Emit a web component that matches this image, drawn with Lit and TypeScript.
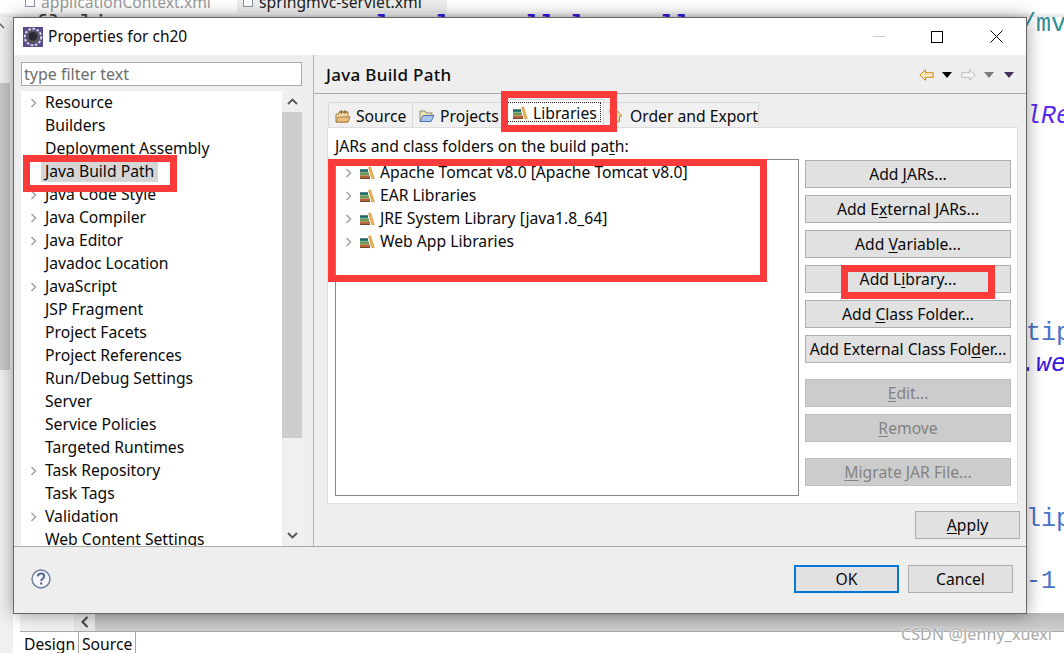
import { LitElement, html, css } from "lit";
import { customElement } from "lit/decorators.js";

const chevron = html`<svg class="chev" width="7" height="10" viewBox="0 0 7 10"><path d="M1.5 1l4 4-4 4" fill="none" stroke="#a6a6a6" stroke-width="1.6"/></svg>`;

const books = html`<svg class="ico" width="16" height="14" viewBox="0 0 16 14">
  <path d="M1 3.5h8v3H1z" fill="#2f7f78"/><path d="M1 3.5h8v1H1z" fill="#174f50"/>
  <path d="M1 6.5h9v3H1z" fill="#6f9a55"/><path d="M1 9.5h10v3.5H1z" fill="#b0653a"/><path d="M1 12h10v1H1z" fill="#7d4426"/>
  <path d="M9.5 1.5l2-.8 3.8 11.8-2.4.5z" fill="#eeb64e" stroke="#b9802a" stroke-width=".5"/>
</svg>`;

const tree: [string, boolean][] = [
  ["Resource", true], ["Builders", false], ["Deployment Assembly", false], ["Java Build Path", false],
  ["Java Code Style", true], ["Java Compiler", true], ["Java Editor", true], ["Javadoc Location", false],
  ["JavaScript", true], ["JSP Fragment", false], ["Project Facets", false], ["Project References", false],
  ["Run/Debug Settings", false], ["Server", false], ["Service Policies", false], ["Targeted Runtimes", false],
  ["Task Repository", true], ["Task Tags", false], ["Validation", true], ["Web Content Settings", false],
];

const libs = ["Apache Tomcat v8.0 [Apache Tomcat v8.0]", "EAR Libraries", "JRE System Library [java1.8_64]", "Web App Libraries"];

@customElement("app-root")
export class AppRoot extends LitElement {
  static styles = css`
    :host { display: block; position: relative; width: 1064px; height: 653px; overflow: hidden; background: #fff;
      font-family: "Noto Sans", sans-serif; font-size: 15.7px; color: #0a0a0a; }
    * { box-sizing: border-box; }
    u { text-underline-offset: 2px; text-decoration-thickness: 1px; }

    /* desktop behind the dialog */
    .topstrip { position: absolute; left: 0; top: 0; width: 1064px; height: 17px; background: linear-gradient(#fff 70%, #e4e4e4); }
    .etab { position: absolute; top: -9px; white-space: nowrap; }
    .etab.a { left: 41px; color: #9a9a9a; }
    .etab.b { left: 259px; color: #222; }
    .etabbg { position: absolute; left: 237px; top: 0; width: 210px; height: 13px; background: #eee; }
    .xfile { position: absolute; top: 0; width: 10px; height: 7px; border: 1px solid #8a93a8; border-top: 0; background: #fff; }
    .leftgrey { position: absolute; left: 0; top: 17px; width: 13px; height: 636px; background: #f0f0f0; }
    .leftup { position: absolute; left: 0; top: 22px; }
    .leftthumb { position: absolute; left: 0; top: 83px; width: 10px; height: 287px; background: #c8c8c8; }
    .tips { position: absolute; left: 0; top: 0; width: 1014px; height: 17px; overflow: hidden; }
    .code { position: absolute; font-family: "Liberation Mono", monospace; font-size: 25px; white-space: pre; line-height: 30px; }
    .c0 { left: 375px; top: 12px; color: #3a18e0; font-weight: 700; }
    .c00 { left: 33px; top: 12px; color: #444; }
    .c1 { left: 1021px; top: 10px; color: #2f8f98; }
    .c2 { left: 1026px; top: 102px; color: #5a2cf0; font-style: italic; }
    .c3 { left: 1026px; top: 319px; color: #4a74c8; }
    .c4 { left: 1021px; top: 350px; color: #3a18e0; font-style: italic; }
    .c5 { left: 1026px; top: 505px; color: #4a74c8; }
    .c6 { left: 1026px; top: 567px; color: #4a74c8; }
    .hbar { position: absolute; left: 20px; top: 613px; width: 1044px; height: 19px; display: flex; border-bottom: 1px solid #a8a8a8; background: #f2f2f2; }
    .hbtn { margin-left: 54px; width: 21px; background: #e6e6e6; display: flex; align-items: center; justify-content: center; }
    .hthumb { flex: 1; background: linear-gradient(#b8b8b8, #cfcfcf); }
    .btabs { position: absolute; left: 20px; top: 632px; display: flex; height: 21px; line-height: 24px; }
    .btabs span { padding: 0 1px 0 4px; border-right: 1px solid #a8a8a8; background: #fff; }
    .btabs span:first-child { width: 59px; }
    .btabs span:last-child { width: 57px; padding-left: 3px; }
    .wm { position: absolute; left: 901px; top: 624px; font-size: 16px; line-height: 20px; color: #a9a9a9; letter-spacing: .1px; text-shadow: 0 0 1px #fff, 0 0 2px #fff; }

    /* dialog */
    .dialog { position: absolute; left: 13px; top: 17px; width: 1014px; height: 597px; background: #eee; border: 1px solid #666;
      box-shadow: 0 0 16px rgba(0,0,0,.38); display: flex; flex-direction: column; }
    .title { height: 37px; background: #fff; display: flex; align-items: center; padding-left: 9px; gap: 5px; flex: none; }
    .title .name { flex: 1; padding-bottom: 1px; font-size: 15.5px; }
    .winbtns { display: flex; height: 37px; }
    .winbtn { width: 59px; display: flex; align-items: center; justify-content: center; }
    .winbtn.mx { padding-right: 1px; }
    .body { flex: 1; display: flex; min-height: 0; }
    .left { width: 299px; flex: none; padding: 7px 11px 0 7px; display: flex; flex-direction: column; gap: 5px; min-height: 0; }
    .filter { height: 24px; flex: none; background: #fff; border: 1px solid #aaa; color: #6d6d6d; padding-left: 2px; line-height: 22px; font-size: 16px; }
    .tree { flex: 1; min-height: 0; background: #fff; display: flex; overflow: hidden; }
    .rows { flex: 1; min-width: 0; overflow: hidden; }
    .row { height: 23px; display: flex; align-items: center; padding-left: 9px; line-height: 21px; white-space: nowrap; }
    .chevslot { width: 15px; flex: none; display: flex; align-items: center; }
    .row .t { padding: 0 4px 0 0; }
    .row.sel .t { background: #d6d6d6; margin-left: -4px; padding-left: 4px; height: 21px; }
    .vbar { width: 20px; flex: none; background: #f0f0f0; display: flex; flex-direction: column; }
    .vbtn { height: 21px; flex: none; display: flex; align-items: center; justify-content: center; }
    .vthumb { height: 326px; flex: none; background: #cdcdcd; }
    .vgap { flex: 1; }
    .sash { width: 1px; flex: none; background: #b4b4b4; }
    .right { flex: 1; min-width: 0; display: flex; flex-direction: column; }
    .head { height: 39px; flex: none; border-bottom: 1px solid #aaa; display: flex; align-items: center; padding: 1px 12px 0 12px; }
    .head .h { flex: 1; font-size: 17px; font-weight: 500; letter-spacing: .3px; }
    .nav { display: flex; align-items: center; }
    .content { flex: 1; min-height: 0; padding: 8px 6px 6px 13px; display: flex; flex-direction: column; }
    .tabs { display: flex; height: 25px; flex: none; padding-left: 1px; }
    .tab { height: 25px; background: #f0f0f0; border: 1px solid #d9d9d9; border-bottom: 0; border-left: 0; display: flex; align-items: center; white-space: nowrap; padding-top: 1px; position: relative; }
    .tab:first-child { border-left: 1px solid #d9d9d9; }
    .tab.src { width: 85px; padding-left: 6px; gap: 5px; }
    .tab.prj { width: 93px; padding-left: 6px; gap: 5px; }
    .tab.lib { width: 98px; height: 28px; margin-top: -3px; background: #fff; padding: 0 0 2px 6px; gap: 5px; }
    .tab.ord { width: 155px; padding-left: 4px; gap: 6px; }
    .focus { position: absolute; left: 1px; top: 2px; right: 2px; bottom: 5px; border: 1px dotted #222; pointer-events: none; }
    .panel { height: 377px; flex: none; margin-right: 2px; background: #fff; border: 1px solid #ddd; padding: 7px 0 0 7px;
      display: grid; grid-template-columns: 464px 206px; column-gap: 6px; grid-template-rows: 24px 337px; }
    .lbl { grid-column: 1 / 3; line-height: 20px; padding-top: 1px; white-space: nowrap; }
    .list { border: 1px solid #888; padding-top: 1px; }
    .lrow { height: 23px; display: flex; align-items: center; padding-left: 9px; white-space: nowrap; line-height: 21px; }
    .lrow .ico { margin-right: 5px; flex: none; }
    .lrow .chevslot { width: 14px; }
    .btns { display: flex; flex-direction: column; gap: 7px; padding-top: 1px; }
    .btn { height: 28px; flex: none; background: #e1e1e1; border: 1px solid #adadad; display: flex; align-items: center; justify-content: center; white-space: nowrap; line-height: 20px; padding: 0 0 1px; }
    .btn.off { background: #ccc; border-color: #bdbdbd; color: #838383; }
    .btn.sp { margin-top: 9px; }
    .applyrow { display: flex; justify-content: flex-end; margin-top: 7px; }
    .w105 { width: 105px; }
    .foot { height: 67px; flex: none; border-top: 1px solid #aaa; display: flex; align-items: center; padding: 0 13px 2px 17px; gap: 9px; }
    .help { flex: 1; display: flex; align-items: center; }
    .btn.def { border: 2px solid #0078d7; }

    /* hand-drawn annotations */
    .mark { position: absolute; border: 7px solid #fb3a3a; pointer-events: none; }
    .m1 { left: 23px; top: 155px; width: 154px; height: 37px; }
    .m2 { left: 501px; top: 91px; width: 116px; height: 41px; }
    .m3 { left: 328px; top: 159px; width: 439px; height: 123px; }
    .m4 { left: 841px; top: 265px; width: 154px; height: 34px; }
  `;

  render() {
    const tri = (c: string, ml: number) => html`<svg style="margin-left:${ml}px" width="10" height="6" viewBox="0 0 10 6"><path d="M0 0h10L5 6z" fill="${c}"/></svg>`;
    return html`
      <div class="topstrip"></div>
      <div class="etabbg"></div>
      <div class="xfile" style="left:25px"></div>
      <div class="xfile" style="left:243px"></div>
      <div class="etab a">applicationContext.xml</div>
      <div class="etab b">springmvc-servlet.xml</div>
      <div class="leftgrey"></div>
      <svg class="leftup" width="10" height="8" viewBox="0 0 10 8"><path d="M-1 1l5 5" fill="none" stroke="#666" stroke-width="1.5"/></svg>
      <div class="leftthumb"></div>
      <div class="tips">
        <div class="code c00">{} li</div>
        <div class="code c0">l   l     ll l     ll</div>
      </div>
      <div class="code c1">/mv</div>
      <div class="code c2">lRe</div>
      <div class="code c3">tip</div>
      <div class="code c4">.we</div>
      <div class="code c5">lip</div>
      <div class="code c6">-1</div>
      <div class="hbar">
        <div class="hbtn"><svg width="8" height="12" viewBox="0 0 8 12"><path d="M6.5 1L1.5 6l5 5" fill="none" stroke="#444" stroke-width="2"/></svg></div>
        <div class="hthumb"></div>
      </div>
      <div class="btabs"><span>Design</span><span>Source</span></div>

      <div class="dialog">
        <div class="title">
          <svg width="20" height="20" viewBox="0 0 20 20">
            <rect width="20" height="20" fill="#5b4a8c"/>
            <circle cx="10" cy="10" r="8.2" fill="none" stroke="#d9d9de" stroke-width="2" stroke-dasharray="2.6 1.6"/>
            <circle cx="10" cy="10" r="6.6" fill="#55555f"/>
            <circle cx="10" cy="9.4" r="4.4" fill="#2a2a33"/>
          </svg>
          <span class="name">Properties for ch20</span>
          <div class="winbtns">
            <div class="winbtn"><svg width="12" height="12" viewBox="0 0 12 12"><path d="M0 5.5h12" stroke="#ccc"/></svg></div>
            <div class="winbtn mx"><svg width="12" height="12" viewBox="0 0 12 12"><rect x=".5" y=".5" width="11" height="11" fill="none" stroke="#000"/></svg></div>
            <div class="winbtn"><svg width="13" height="13" viewBox="0 0 13 13"><path d="M.5.5l12 12M12.5.5l-12 12" stroke="#000"/></svg></div>
          </div>
        </div>
        <div class="body">
          <div class="left">
            <div class="filter">type filter text</div>
            <div class="tree">
              <div class="rows">
                ${tree.map(([t, c]) => html`<div class="row ${t === "Java Build Path" ? "sel" : ""}"><span class="chevslot">${c ? chevron : ""}</span><span class="t">${t}</span></div>`)}
              </div>
              <div class="vbar">
                <div class="vbtn"><svg width="11" height="7" viewBox="0 0 11 7"><path d="M1 6l4.5-4.5L10 6" fill="none" stroke="#555" stroke-width="1.8"/></svg></div>
                <div class="vthumb"></div>
                <div class="vgap"></div>
                <div class="vbtn"><svg width="11" height="7" viewBox="0 0 11 7"><path d="M1 1l4.5 4.5L10 1" fill="none" stroke="#555" stroke-width="1.8"/></svg></div>
              </div>
            </div>
          </div>
          <div class="sash"></div>
          <div class="right">
            <div class="head">
              <span class="h">Java Build Path</span>
              <div class="nav">
                <svg width="15" height="12" viewBox="0 0 15 12"><path d="M.8 6L6.5.7v3h7.7v4.6H6.5v3z" fill="#fbe7b8" stroke="#c98a1e"/></svg>
                ${tri("#000", 8)}
                <svg style="margin-left:9px" width="15" height="12" viewBox="0 0 15 12"><path d="M14.2 6L8.5.7v3H.8v4.6h7.7v3z" fill="#f4f4f4" stroke="#bdbdbd"/></svg>
                ${tri("#7a7a7a", 8)}
                ${tri("#43305f", 10)}
              </div>
            </div>
            <div class="content">
              <div class="tabs">
                <div class="tab src">
                  <svg width="16" height="14" viewBox="0 0 16 14"><path d="M1 13V5h3V3h9v10z" fill="#f3d9a6" stroke="#a9803f"/><path d="M6.5 1v4M10 1v4M4 3h9" stroke="#8a6a3a" fill="none"/><path d="M1 13l2-5h12l-2 5z" fill="#e9c07f" stroke="#a9803f"/></svg>
                  <span>Source</span>
                </div>
                <div class="tab prj">
                  <svg width="16" height="14" viewBox="0 0 16 14"><path d="M1 12V2h5l1 2h6v3" fill="#f2e2b8" stroke="#8f8a6a"/><path d="M1 12.5l3-6h11l-3 6z" fill="#a9c6ec" stroke="#4f74ad"/></svg>
                  <span>Projects</span>
                </div>
                <div class="tab lib">
                  ${books}<span>Libraries</span><div class="focus"></div>
                </div>
                <div class="tab ord">
                  <svg width="16" height="15" viewBox="0 0 16 15"><path d="M9.5 3l4.5 5h-2.5v5.5h-4V8H5z" fill="#fbe7a8" stroke="#c0871f"/><path d="M2 1v4" stroke="#c0871f"/></svg>
                  <span>Order and Export</span>
                </div>
              </div>
              <div class="panel">
                <div class="lbl">JARs and class folders on the build pa<u>t</u>h:</div>
                <div class="list">
                  ${libs.map((l) => html`<div class="lrow"><span class="chevslot">${chevron}</span>${books}<span>${l}</span></div>`)}
                </div>
                <div class="btns">
                  <div class="btn"><span>Add <u>J</u>ARs...</span></div>
                  <div class="btn"><span>Add E<u>x</u>ternal JARs...</span></div>
                  <div class="btn"><span>Add <u>V</u>ariable...</span></div>
                  <div class="btn"><span>Add L<u>i</u>brary...</span></div>
                  <div class="btn"><span>Add <u>C</u>lass Folder...</span></div>
                  <div class="btn"><span>Add External Class Fol<u>d</u>er...</span></div>
                  <div class="btn off sp"><span><u>E</u>dit...</span></div>
                  <div class="btn off"><span><u>R</u>emove</span></div>
                  <div class="btn off sp"><span><u>M</u>igrate JAR File...</span></div>
                </div>
              </div>
              <div class="applyrow"><div class="btn w105"><span><u>A</u>pply</span></div></div>
            </div>
          </div>
        </div>
        <div class="foot">
          <div class="help">
            <svg width="20" height="20" viewBox="0 0 20 20"><circle cx="10" cy="10" r="9" fill="#f4f6f9" stroke="#6b7b9c" stroke-width="1.4"/><path d="M6.8 7.4c.2-1.9 1.5-2.8 3.2-2.8 1.9 0 3.2 1.1 3.2 2.7 0 2.4-3 2.4-3 4.6" fill="none" stroke="#56678c" stroke-width="2"/><rect x="9.1" y="13.4" width="2.1" height="2.1" fill="#56678c"/></svg>
          </div>
          <div class="btn w105 def">OK</div>
          <div class="btn w105">Cancel</div>
        </div>
      </div>

      <div class="mark m1"></div>
      <div class="mark m2"></div>
      <div class="mark m3"></div>
      <div class="mark m4"></div>
      <div class="wm">CSDN @Jenny_xuexi</div>
    `;
  }
}
